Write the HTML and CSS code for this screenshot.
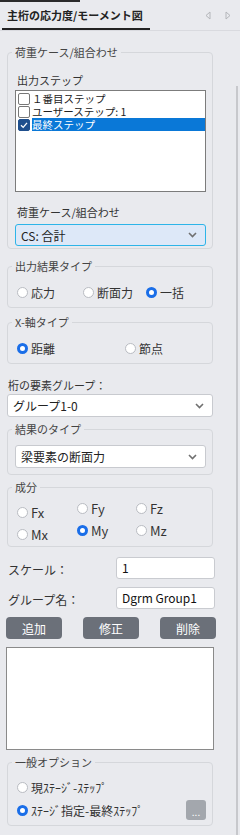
FILE: index.html
```html
<!DOCTYPE html>
<html lang="ja">
<head>
    <meta charset="UTF-8">
    <meta name="viewport" content="width=device-width, initial-scale=1.0">
    <title>主桁の応力度/モーメント図</title>
    <link rel="stylesheet" href="styles.css">
</head>
<body>
    <header class="tab-bar">
        <div class="tab-title">主桁の応力度/モーメント図</div>
        <div class="tab-arrows">
            <svg width="6" height="9" viewBox="0 0 6 9"><path d="M5 1 L1 4.5 L5 8 Z" fill="none" stroke="#b4b6ba" stroke-width="1"/></svg>
            <svg width="6" height="9" viewBox="0 0 6 9"><path d="M1 1 L5 4.5 L1 8 Z" fill="none" stroke="#b4b6ba" stroke-width="1"/></svg>
        </div>
    </header>

    <div class="body-wrap">
        <main class="panel">
            <section class="group g-load">
                <div class="group-title">荷重ケース/組合わせ</div>
                <div class="label">出力ステップ</div>
                <div class="step-list">
                    <div class="step"><span class="check"></span><span class="step-text">１番目ステップ</span></div>
                    <div class="step"><span class="check"></span><span class="step-text">ユーザーステップ: 1</span></div>
                    <div class="step selected">
                        <span class="check on"><svg width="10" height="10" viewBox="0 0 10 10"><path d="M2 5.2 L4.2 7.4 L8 2.8" fill="none" stroke="#fff" stroke-width="1.3"/></svg></span>
                        <span class="step-text">最終ステップ</span>
                    </div>
                </div>
                <div class="label label-2">荷重ケース/組合わせ</div>
                <div class="select select-active">
                    <span>CS: 合計</span>
                    <svg width="9" height="6" viewBox="0 0 9 6"><path d="M1 1 L4.5 4.5 L8 1" fill="none" stroke="#707070" stroke-width="1.6"/></svg>
                </div>
            </section>

            <section class="group g-output">
                <div class="group-title">出力結果タイプ</div>
                <div class="radios cols-result">
                    <label class="opt"><span class="dot"></span>応力</label>
                    <label class="opt"><span class="dot"></span>断面力</label>
                    <label class="opt"><span class="dot on"></span>一括</label>
                </div>
            </section>

            <section class="group g-axis">
                <div class="group-title">X-軸タイプ</div>
                <div class="radios cols-axis">
                    <label class="opt"><span class="dot on"></span>距離</label>
                    <label class="opt"><span class="dot"></span>節点</label>
                </div>
            </section>

            <div class="label label-group">桁の要素グループ：</div>
            <div class="select select-wide">
                <span>グループ1-0</span>
                <svg width="9" height="6" viewBox="0 0 9 6"><path d="M1 1 L4.5 4.5 L8 1" fill="none" stroke="#707070" stroke-width="1.6"/></svg>
            </div>

            <section class="group g-result">
                <div class="group-title">結果のタイプ</div>
                <div class="select">
                    <span>梁要素の断面力</span>
                    <svg width="9" height="6" viewBox="0 0 9 6"><path d="M1 1 L4.5 4.5 L8 1" fill="none" stroke="#707070" stroke-width="1.6"/></svg>
                </div>
            </section>

            <section class="group g-comp">
                <div class="group-title">成分</div>
                <div class="comp-grid">
                    <div class="comp-col first">
                        <label class="opt latin"><span class="dot"></span>Fx</label>
                        <label class="opt latin"><span class="dot"></span>Mx</label>
                    </div>
                    <div class="comp-col">
                        <label class="opt latin"><span class="dot"></span>Fy</label>
                        <label class="opt latin"><span class="dot on"></span>My</label>
                    </div>
                    <div class="comp-col">
                        <label class="opt latin"><span class="dot"></span>Fz</label>
                        <label class="opt latin"><span class="dot"></span>Mz</label>
                    </div>
                </div>
            </section>

            <div class="field-row first-row">
                <span class="field-label">スケール：</span>
                <div class="text-input">1</div>
            </div>
            <div class="field-row">
                <span class="field-label">グループ名：</span>
                <div class="text-input">Dgrm Group1</div>
            </div>

            <div class="buttons">
                <button>追加</button>
                <button>修正</button>
                <button>削除</button>
            </div>

            <div class="group-list"></div>

            <section class="group g-general">
                <div class="group-title">一般オプション</div>
                <label class="opt opt-first"><span class="dot"></span>現ｽﾃｰｼﾞ-ｽﾃｯﾌﾟ</label>
                <div class="opt-row">
                    <label class="opt"><span class="dot on"></span>ｽﾃｰｼﾞ指定-最終ｽﾃｯﾌﾟ</label>
                    <span class="more">...</span>
                </div>
            </section>
        </main>
        <div class="scroll-track"><div class="scroll-thumb"></div></div>
    </div>
</body>
</html>
```

FILE: styles.css
```css
body {
    margin: 0;
    background-color: #e9eaee;
    color: #333;
    font-family: "Noto Sans CJK JP", "Noto Sans", sans-serif;
    font-size: 11px;
    width: 240px;
    height: 835px;
    overflow: hidden;
}

/* tab header */
.tab-bar {
    height: 28px;
    border-top: 2px solid transparent;
    border-bottom: 1px solid #d9dadf;
    display: flex;
    justify-content: space-between;
    align-items: stretch;
    position: relative;
}

.tab-bar::before {
    content: "";
    position: absolute;
    top: -2px;
    left: 0;
    width: 80px;
    height: 2px;
    background: #2b2b2b;
}

.tab-title {
    margin-left: 2px;
    width: 143px;
    padding-left: 5px;
    border-bottom: 2px solid #222;
    font-weight: bold;
    font-size: 11px;
    line-height: 26px;
    color: #222;
}

.tab-arrows {
    display: flex;
    gap: 14px;
    align-items: center;
    padding: 0 9px 2px 0;
}

.body-wrap {
    display: flex;
}

.panel {
    width: 210px;
    padding: 0 6px;
}

.scroll-track {
    width: 18px;
    padding-top: 55px;
}

.scroll-thumb {
    margin-left: 14px;
    width: 2px;
    height: 760px;
    background: #c7c8cc;
}

/* group boxes */
.group {
    margin: 0 3px 0 1px;
    padding: 0 6px 7px 7px;
    border: 1px solid #d5d7db;
    border-radius: 4px;
}

.group-title {
    width: fit-content;
    margin: -8px 0 0 -3px;
    padding: 0 3px;
    background: #e9eaee;
    line-height: 14px;
    color: #444;
}

.label {
    line-height: 14px;
}

.g-load {
    margin-top: 21px;
    padding-bottom: 2px;
}

.g-load .label {
    margin-top: 14px;
    padding-left: 2px;
}

.g-load .label-2 {
    margin-top: 13px;
}

.step-list {
    margin-top: 3px;
    height: 99px;
    padding-top: 1px;
    background: #fff;
    border: 1px solid #7c7c7c;
}

.step {
    display: flex;
    align-items: center;
    height: 13px;
    padding-left: 2px;
}

.check {
    width: 10px;
    height: 10px;
    border: 1px solid #777;
    border-radius: 2px;
    background: #fff;
    display: flex;
    align-items: center;
    justify-content: center;
}

.check.on {
    background: #1f4f8d;
    border-color: #1f4f8d;
}

.step-text {
    flex: 1;
    margin-left: 2px;
    font-size: 10.5px;
    line-height: 13px;
    height: 13px;
    overflow: hidden;
    color: #222;
}

.step.selected .step-text {
    background: #0a78d7;
    color: #fff;
}

.select {
    height: 21px;
    padding: 0 8px 0 5px;
    background: #fff;
    border: 1px solid #c8cacf;
    border-radius: 3px;
    display: flex;
    align-items: center;
    justify-content: space-between;
    font-size: 12px;
    color: #222;
}

.select-active {
    height: 20px;
    margin-top: 5px;
    background: #dde8f8;
    border-color: #2db4e8;
}

.select-wide {
    margin: 2px 3px 0 1px;
}

.g-output {
    margin-top: 17px;
}

.g-axis {
    margin-top: 14px;
}

.radios {
    display: grid;
    margin-top: 11px;
    padding-left: 2px;
}

.cols-result {
    grid-template-columns: 66px 63px auto;
}

.cols-axis {
    grid-template-columns: 108px auto;
}

.opt {
    display: flex;
    align-items: center;
    height: 16px;
    font-size: 12px;
    color: #333;
}

.dot {
    width: 9px;
    height: 9px;
    margin-right: 3px;
    border: 1px solid #b9bcc2;
    border-radius: 50%;
    background: #fff;
}

.dot.on {
    width: 5px;
    height: 5px;
    border: 3px solid #1a6ee8;
}

.label-group {
    margin-top: 14px;
    padding-left: 2px;
}

.g-result {
    margin-top: 12px;
    padding-bottom: 6px;
}

.g-result .select {
    margin-top: 9px;
}

.g-comp {
    margin-top: 12px;
    padding-bottom: 4px;
}

.comp-grid {
    display: grid;
    grid-template-columns: 60px 59px auto;
    padding-left: 2px;
    margin-top: 6px;
}

.comp-col {
    display: flex;
    flex-direction: column;
    gap: 6px;
}

.comp-col.first {
    padding-top: 4px;
}

.opt.latin {
    font-size: 13px;
}

.field-row {
    display: flex;
    align-items: center;
    height: 22px;
    margin-top: 8px;
}

.field-row.first-row {
    margin-top: 10px;
}

.field-label {
    width: 108px;
    padding: 3px 0 0 2px;
    font-size: 12px;
}

.text-input {
    width: 92px;
    height: 20px;
    padding-left: 5px;
    background: #fff;
    border: 1px solid #c9cbd0;
    border-radius: 3px;
    font-size: 12px;
    line-height: 20px;
    color: #111;
}

.buttons {
    display: flex;
    justify-content: space-between;
    margin-top: 8px;
}

.buttons button {
    width: 56px;
    height: 22px;
    padding: 0;
    border: none;
    border-radius: 4px;
    background: #6b7079;
    color: #fff;
    font-family: inherit;
    font-size: 12px;
}

.group-list {
    margin: 8px 2px 0 0;
    height: 101px;
    background: #fff;
    border: 1px solid #8a8a8a;
}

.g-general {
    margin-top: 12px;
    padding-bottom: 5px;
}

.opt-first {
    margin-top: 10px;
    padding-left: 2px;
}

.opt-row {
    display: flex;
    justify-content: space-between;
    align-items: center;
    height: 20px;
    margin-top: 5px;
    padding-left: 2px;
}

.more {
    width: 20px;
    height: 20px;
    border-radius: 3px;
    background: #a3a7ad;
    color: #fff;
    font-size: 10px;
    line-height: 24px;
    text-align: center;
}
```
